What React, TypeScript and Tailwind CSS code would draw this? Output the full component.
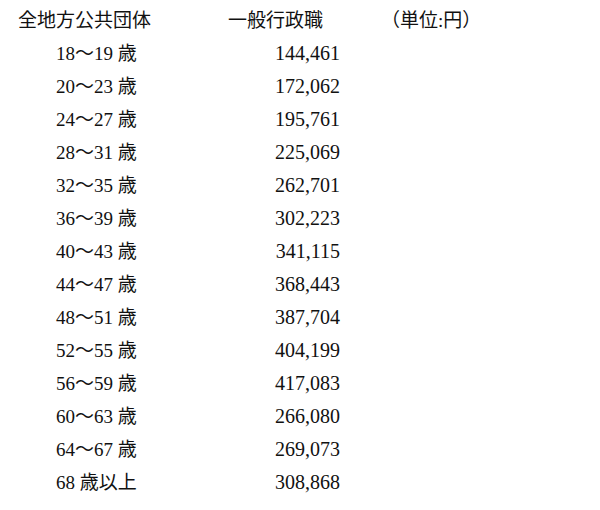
import React from "react";

const rows: [string, string][] = [
  ["18～19 歳", "144,461"],
  ["20～23 歳", "172,062"],
  ["24～27 歳", "195,761"],
  ["28～31 歳", "225,069"],
  ["32～35 歳", "262,701"],
  ["36～39 歳", "302,223"],
  ["40～43 歳", "341,115"],
  ["44～47 歳", "368,443"],
  ["48～51 歳", "387,704"],
  ["52～55 歳", "404,199"],
  ["56～59 歳", "417,083"],
  ["60～63 歳", "266,080"],
  ["64～67 歳", "269,073"],
  ["68 歳以上", "308,868"],
];

export default function App() {
  return (
    <div
      className="h-[510px] w-[600px] bg-white pt-[4px] text-[19px] leading-[33px] text-[#111]"
      style={{ fontFamily: '"Liberation Serif", "Noto Sans CJK JP", serif' }}
    >
      <div className="flex pl-[18px]">
        <span className="w-[210px]">全地方公共団体</span>
        <span className="w-[153px]">一般行政職</span>
        <span>（単位:円）</span>
      </div>
      {rows.map(([age, pay]) => (
        <div key={age} className="flex pl-[56px]">
          <span className="w-[200px]">{age}</span>
          <span className="w-[84px] text-right text-[20px]">{pay}</span>
        </div>
      ))}
    </div>
  );
}
